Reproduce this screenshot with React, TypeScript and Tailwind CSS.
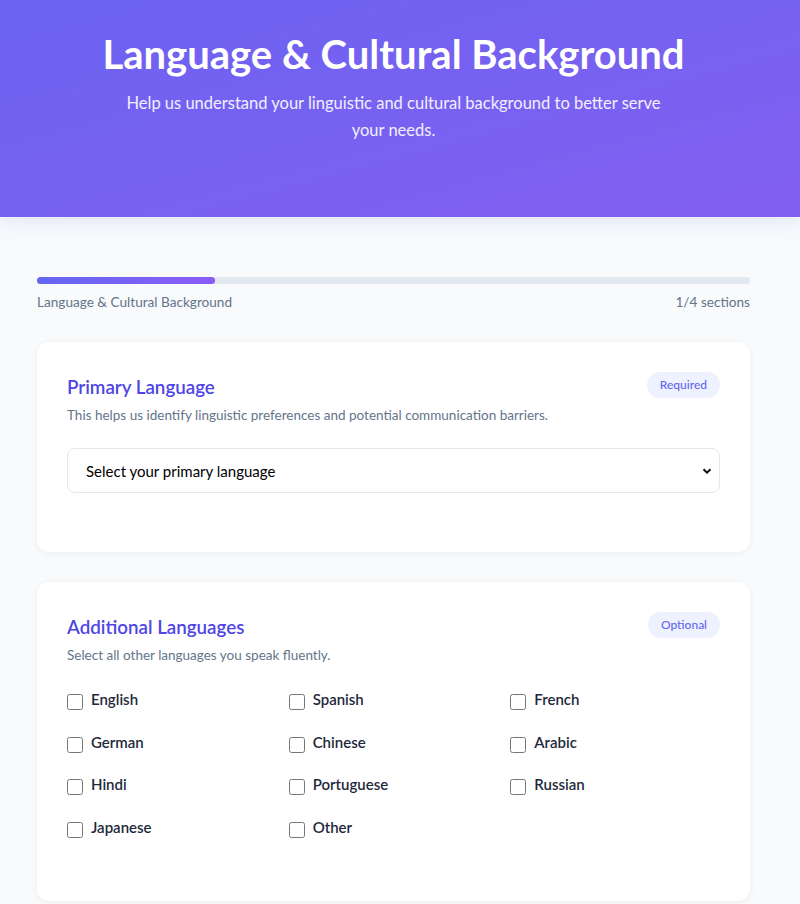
import { useState } from "react";

const languages = [
  "English",
  "Spanish",
  "French",
  "German",
  "Chinese",
  "Arabic",
  "Hindi",
  "Portuguese",
  "Russian",
  "Japanese",
  "Other",
];

export default function App() {
  const [primary, setPrimary] = useState("");
  const [picked, setPicked] = useState<string[]>([]);

  const toggle = (lang: string) =>
    setPicked((p) => (p.includes(lang) ? p.filter((l) => l !== lang) : [...p, lang]));

  return (
    <div className="min-h-screen bg-[#f8fafc] font-['Lato','Noto_Sans',sans-serif]">
      {/* Header */}
      <header className="bg-gradient-to-br from-[#6b63f2] to-[#825ff0] pb-[73px] pt-[31px] pr-[13px] text-center text-white shadow-[0_6px_18px_rgba(99,102,241,0.12)]">
        <h1 className="text-[40px] font-bold leading-[46px]">Language &amp; Cultural Background</h1>
        <p className="mx-auto mt-[13px] max-w-[560px] text-[16.5px] leading-[27px] text-white/90">
          Help us understand your linguistic and cultural background to better serve your needs.
        </p>
      </header>

      <main className="pl-[37px] pr-[50px] pt-[60px] pb-10">
        {/* Progress */}
        <div className="h-[7px] w-full rounded-full bg-[#e2e8f0]">
          <div className="h-full w-1/4 rounded-full bg-gradient-to-r from-[#6366f1] to-[#8b5cf6]" />
        </div>
        <div className="mt-[8px] flex items-center justify-between text-[13.6px] text-[#64748b]">
          <span>Language &amp; Cultural Background</span>
          <span>1/4 sections</span>
        </div>

        {/* Primary Language */}
        <section className="mt-[30px] rounded-xl bg-white px-[30px] pt-[30px] pb-[59px] shadow-[0_1px_6px_rgba(15,23,42,0.06)]">
          <div className="flex items-start justify-between">
            <h2 className="mt-[2px] text-[18.75px] font-semibold leading-[26px] text-[#4f46e5]">Primary Language</h2>
            <span className="rounded-full bg-[#eef2ff] px-[13px] py-[4px] text-[12px] font-medium leading-[18px] text-[#6366f1]">
              Required
            </span>
          </div>
          <p className="mt-[5px] text-[13.5px] leading-[20px] text-[#64748b]">
            This helps us identify linguistic preferences and potential communication barriers.
          </p>
          <div className="relative mt-[23px]">
            <select
              value={primary}
              onChange={(e) => setPrimary(e.target.value)}
              className="h-[45px] w-full appearance-none rounded-lg border border-[#e2e8f0] bg-white pl-[18px] pr-10 text-[15px] text-black focus:outline-none"
            >
              <option value="">Select your primary language</option>
              {languages.map((l) => (
                <option key={l} value={l}>
                  {l}
                </option>
              ))}
            </select>
            <svg
              className="pointer-events-none absolute right-[8px] top-1/2 -translate-y-1/2"
              width="10"
              height="10"
              viewBox="0 0 10 10"
            >
              <path d="M1.5 3.2 5 6.7 8.5 3.2" fill="none" stroke="#111" strokeWidth="2" />
            </svg>
          </div>
        </section>

        {/* Additional Languages */}
        <section className="mt-[30px] rounded-xl bg-white px-[30px] pt-[30px] pb-[62px] shadow-[0_1px_6px_rgba(15,23,42,0.06)]">
          <div className="flex items-start justify-between">
            <h2 className="mt-[2px] text-[18.75px] font-semibold leading-[26px] text-[#4f46e5]">Additional Languages</h2>
            <span className="rounded-full bg-[#eef2ff] px-[13px] py-[4px] text-[12px] font-medium leading-[18px] text-[#6366f1]">
              Optional
            </span>
          </div>
          <p className="mt-[5px] text-[13.5px] leading-[20px] text-[#64748b]">
            Select all other languages you speak fluently.
          </p>
          <div className="mt-[22px] grid grid-cols-3 gap-x-3 gap-y-[18.5px]">
            {languages.map((l) => (
              <label key={l} className="flex cursor-pointer items-start gap-2">
                <input
                  type="checkbox"
                  checked={picked.includes(l)}
                  onChange={() => toggle(l)}
                  className="mt-[7px] h-4 w-4 shrink-0 accent-[#6366f1]"
                />
                <span className="text-[15px] font-semibold leading-[24px] text-[#1e293b]">{l}</span>
              </label>
            ))}
          </div>
        </section>
      </main>
    </div>
  );
}
